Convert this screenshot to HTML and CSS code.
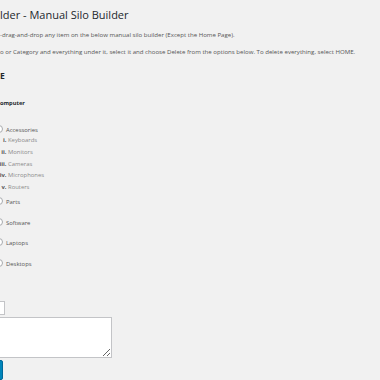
FILE: index.html
```html
<!DOCTYPE html>
<html lang="en">

<head>
    <meta charset="UTF-8">
    <meta name="viewport" content="width=device-width, initial-scale=1.0">
    <title>Manual Silo Builder</title>
    <link rel="stylesheet" href="styles.css">
</head>

<body>
    <div class="page">
        <h1 class="title">lder - Manual Silo Builder</h1>
        <p class="note first">-drag-and-drop any item on the below manual silo builder (Except the Home Page).</p>
        <p class="note">o or Category and everything under it, select it and choose Delete from the options below. To delete everything, select HOME.</p>

        <h3 class="home">E</h3>
        <h4 class="cat">omputer</h4>

        <ul class="silo">
            <li class="silo-item">
                <span class="radio"></span><span class="label">Accessories</span>
                <ol class="sub">
                    <li>Keyboards</li>
                    <li>Monitors</li>
                    <li>Cameras</li>
                    <li>Microphones</li>
                    <li>Routers</li>
                </ol>
            </li>
            <li class="silo-item">
                <span class="radio"></span><span class="label">Parts</span>
                <ol class="sub"></ol>
            </li>
            <li class="silo-item">
                <span class="radio"></span><span class="label">Software</span>
                <ol class="sub"></ol>
            </li>
            <li class="silo-item">
                <span class="radio"></span><span class="label">Laptops</span>
                <ol class="sub"></ol>
            </li>
            <li class="silo-item">
                <span class="radio"></span><span class="label">Desktops</span>
                <ol class="sub"></ol>
            </li>
        </ul>

        <div class="form">
            <input class="field" type="text">
            <textarea class="box"></textarea>
            <button class="btn" type="button"></button>
        </div>
    </div>
</body>

</html>
```

FILE: styles.css
```css
body {
    margin: 0;
    background-color: #f1f1f1;
    font-family: "Open Sans", "Noto Sans", sans-serif;
    color: #444;
    overflow: hidden;
}

.page {
    padding-top: 8px;
}

.title {
    margin: 0;
    font-size: 11px;
    line-height: 14px;
    font-weight: 400;
    color: #23282d;
    white-space: nowrap;
}

.note {
    margin: 7px 0 0;
    font-size: 6.1px;
    line-height: 10px;
    color: #555;
    white-space: nowrap;
}

.note.first {
    margin-top: 8px;
}

.home {
    margin: 13px 0 0;
    font-size: 8.5px;
    line-height: 12px;
    font-weight: 700;
    color: #23282d;
}

.cat {
    margin: 15px 0 0;
    font-size: 5.7px;
    line-height: 12px;
    font-weight: 700;
    color: #23282d;
}

.silo {
    list-style: none;
    margin: 16px 0 0;
    padding: 0;
}

.silo-item {
    margin-bottom: 3px;
    font-size: 5.9px;
    line-height: 10px;
    color: #555;
}

.radio {
    display: inline-block;
    width: 6px;
    height: 6px;
    margin-left: -5px;
    margin-right: 3px;
    border: 1px solid #a7aaad;
    border-radius: 50%;
    background-color: #fff;
    vertical-align: -1px;
}

.sub {
    margin: 0;
    padding-left: 8px;
    min-height: 7.6px;
    list-style: lower-roman;
}

.sub li {
    line-height: 11.8px;
    color: #8a8a8a;
}

.sub li::marker {
    font-weight: 700;
    color: #555;
}

.form {
    display: flex;
    flex-direction: column;
    align-items: flex-start;
    margin-top: 25px;
}

.field {
    width: 30px;
    height: 14px;
    margin: 0 0 0 -25px;
    padding: 0;
    border: 1px solid #c3c4c7;
    box-sizing: border-box;
    background-color: #fff;
}

.box {
    width: 140px;
    height: 41px;
    margin: 2px 0 0 -28px;
    padding: 0;
    border: 1px solid #c3c4c7;
    box-sizing: border-box;
    background-color: #fff;
}

.btn {
    width: 30px;
    height: 20px;
    margin: 2px 0 0 -27px;
    padding: 0;
    border: 1px solid #006799;
    border-radius: 2px;
    background-color: #0085ba;
}
```
